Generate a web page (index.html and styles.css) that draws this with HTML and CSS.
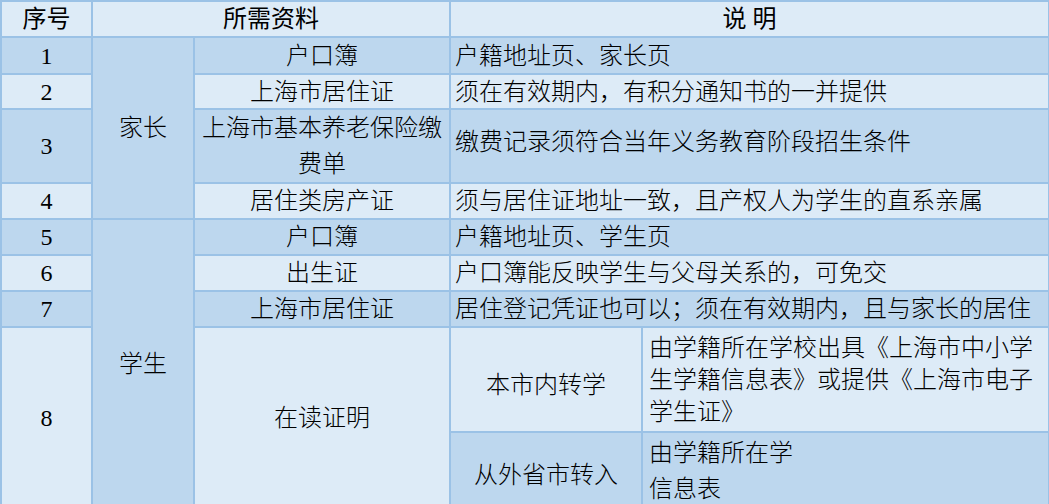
FILE: index.html
```html
<!DOCTYPE html>
<html lang="zh-CN">
<head>
<meta charset="utf-8">
<title>所需资料</title>
<link rel="stylesheet" href="styles.css">
</head>
<body>
<table class="sheet">
  <colgroup>
    <col class="c-no">
    <col class="c-who">
    <col class="c-item">
    <col class="c-sub">
    <col class="c-note">
  </colgroup>
  <thead>
    <tr class="r-head">
      <th>序号</th>
      <th colspan="2">所需资料</th>
      <th colspan="2">说 明</th>
    </tr>
  </thead>
  <tbody>
    <tr class="r-37 dark">
      <td class="num">1</td>
      <td class="who" rowspan="4">家长</td>
      <td class="mid">户口簿</td>
      <td class="note" colspan="2">户籍地址页、家长页</td>
    </tr>
    <tr class="r-35 light">
      <td class="num">2</td>
      <td class="mid">上海市居住证</td>
      <td class="note" colspan="2">须在有效期内，有积分通知书的一并提供</td>
    </tr>
    <tr class="r-73 dark">
      <td class="num">3</td>
      <td class="mid two">上海市基本养老保险缴<br>费单</td>
      <td class="note up" colspan="2">缴费记录须符合当年义务教育阶段招生条件</td>
    </tr>
    <tr class="r-36 light">
      <td class="num">4</td>
      <td class="mid">居住类房产证</td>
      <td class="note" colspan="2">须与居住证地址一致，且产权人为学生的直系亲属</td>
    </tr>
    <tr class="r-36 dark">
      <td class="num">5</td>
      <td class="who" rowspan="5">学生</td>
      <td class="mid">户口簿</td>
      <td class="note" colspan="2">户籍地址页、学生页</td>
    </tr>
    <tr class="r-36 light">
      <td class="num">6</td>
      <td class="mid">出生证</td>
      <td class="note" colspan="2">户口簿能反映学生与父母关系的，可免交</td>
    </tr>
    <tr class="r-36 dark">
      <td class="num">7</td>
      <td class="mid">上海市居住证</td>
      <td class="note" colspan="2">居住登记凭证也可以；须在有效期内，且与家长的居住</td>
    </tr>
    <tr class="r-105 light">
      <td class="num" rowspan="2">8</td>
      <td class="mid" rowspan="2">在读证明</td>
      <td class="mid low">本市内转学</td>
      <td class="note wrap">由学籍所在学校出具《上海市中小学<br>生学籍信息表》或提供《上海市电子<br>学生证》</td>
    </tr>
    <tr class="r-73 dark">
      <td class="mid low">从外省市转入</td>
      <td class="note wrap tall">由学籍所在学<br>信息表</td>
    </tr>
  </tbody>
</table>
</body>
</html>
```

FILE: styles.css
```css
html, body {
  margin: 0;
  padding: 0;
  background: #ffffff;
}

.sheet {
  border-collapse: collapse;
  table-layout: fixed;
  width: 1048px;
  border: 2px solid #9bc2e6;
  font-family: "Liberation Serif", "Noto Sans CJK SC", serif;
  font-size: 24px;
  font-weight: 300;
  color: #000000;
}

.c-no { width: 91px; }
.c-who { width: 102px; }
.c-item { width: 256px; }
.c-sub { width: 192px; }
.c-note { width: 407px; }

.sheet th,
.sheet td {
  border: 2px solid #9bc2e6;
  padding: 0 4px;
  vertical-align: middle;
  line-height: 32px;
  overflow: hidden;
  white-space: nowrap;
}

.sheet th {
  font-weight: 400;
  text-align: center;
  background: #ddebf7;
}

.r-head { height: 36px; }
.r-35 { height: 35px; }
.r-36 { height: 36px; }
.r-37 { height: 37px; }
.r-73 { height: 73px; }
.r-105 { height: 105px; }

.dark td { background: #bdd7ee; }
.light td { background: #ddebf7; }

.sheet td.who {
  background: #bdd7ee;
  text-align: center;
}

.num,
.mid {
  text-align: center;
}

.sheet td.num {
  font-family: "Liberation Serif", serif;
  font-weight: 400;
}

.mid.two {
  line-height: 36px;
  padding: 0;
}

.note {
  text-align: left;
}

.note.up {
  padding-bottom: 8px;
}

.note.wrap {
  padding-left: 6px;
}

.note.tall {
  line-height: 36px;
  padding-top: 2px;
}

.mid.low {
  padding-top: 10px;
}
```
